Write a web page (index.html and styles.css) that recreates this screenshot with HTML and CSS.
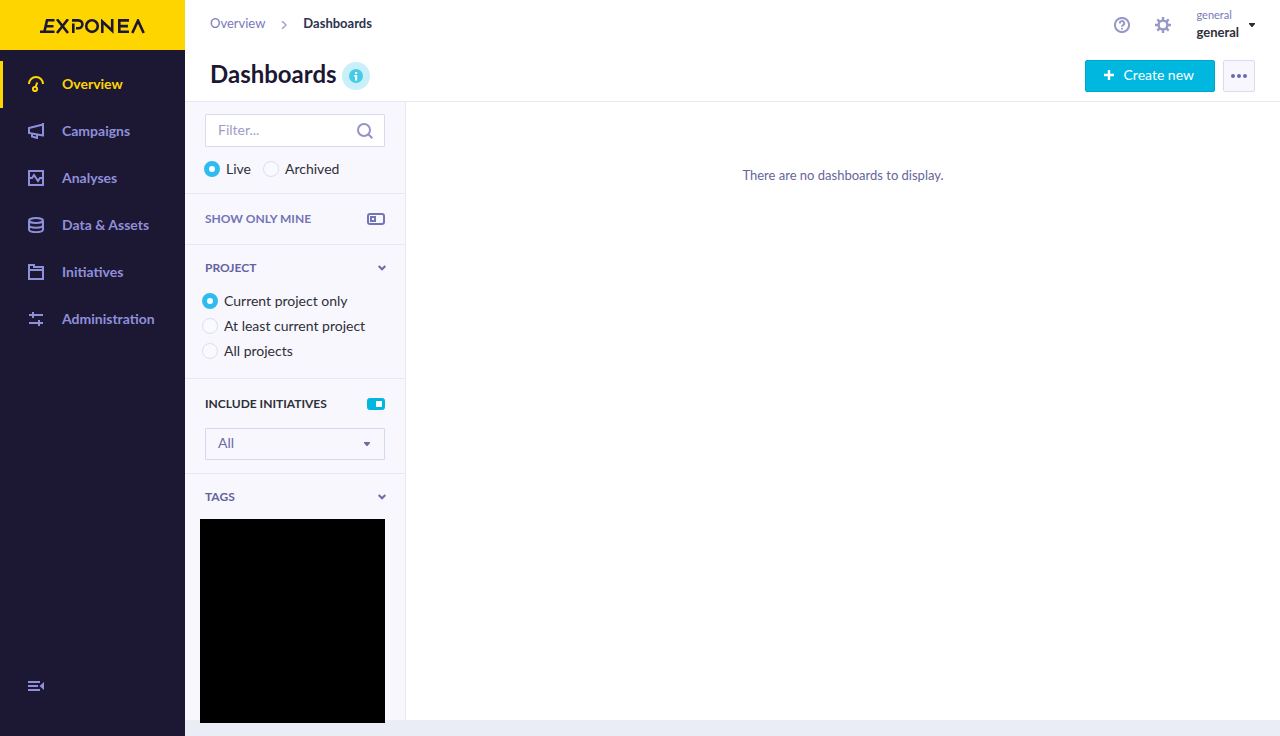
FILE: index.html
```html
<!DOCTYPE html>
<html lang="en">
<head>
<meta charset="utf-8">
<meta name="viewport" content="width=device-width, initial-scale=1">
<title>Dashboards</title>
<link rel="stylesheet" href="styles.css">
</head>
<body class="app">
<aside class="sidebar">
  <a class="brand" href="#" aria-label="Exponea">
    <svg width="106" height="15" viewBox="0 0 106 15" fill="none" stroke="#1c1733" stroke-width="2.6">
      <path d="M6 1.3H14.5M4.5 7.2H13.5M0 12.8H14.5M7 1.3L4.4 12.8"/>
      <path d="M17 .2L28 14M28 .2L17 14"/>
      <path d="M33.3 14V4.5M32 1.4H38.5A3.9 3.9 0 0 1 38.5 9.2H36"/>
      <circle cx="52" cy="7.1" r="5.8"/>
      <path d="M62.3 14V2.5L72.2 11.8V0"/>
      <path d="M89 1.4H79.3V12.8H89M79.3 7.1H88"/>
      <path d="M92.3 14L98 1.6L103.7 14"/>
    </svg>
  </a>
  <nav class="nav">
    <a class="nav-item nav-item-active" href="#">
      <svg class="icon" viewBox="0 0 16 16"><path d="M1 8A7 7 0 0 1 15 8M7.6 11L9.2 6.5"/><circle cx="7" cy="13" r="2.1"/></svg>
      <span>Overview</span>
    </a>
    <a class="nav-item" href="#">
      <svg class="icon" viewBox="0 0 16 16"><path d="M15 0V13.5M15 1.5L1 5V10L15 12.5M4 10.5V13.5L9 15V11.5"/></svg>
      <span>Campaigns</span>
    </a>
    <a class="nav-item" href="#">
      <svg class="icon" viewBox="0 0 16 16"><path d="M1 1H15V15H1ZM1 8H4L6 5L10 11L12 8H15"/></svg>
      <span>Analyses</span>
    </a>
    <a class="nav-item" href="#">
      <svg class="icon" viewBox="0 0 16 16"><ellipse cx="8" cy="3.5" rx="7" ry="2.5"/><path d="M1 3.5V12.5C1 16 15 16 15 12.5V3.5M1 8C1 11.5 15 11.5 15 8"/></svg>
      <span>Data &amp; Assets</span>
    </a>
    <a class="nav-item" href="#">
      <svg class="icon" viewBox="0 0 16 16"><path d="M1 1H6V3H15V15H1ZM1 6H15"/></svg>
      <span>Initiatives</span>
    </a>
    <a class="nav-item" href="#">
      <svg class="icon" viewBox="0 0 16 16"><path d="M1 4H15M5 1V7M1 12H15M11 9V15"/></svg>
      <span>Administration</span>
    </a>
  </nav>
  <button class="collapse" type="button" aria-label="Collapse menu">
    <svg class="icon" viewBox="0 0 16 16"><path d="M0 4H12M0 8H10M0 12H12"/><path class="solid" d="M16 4V12L11.5 8Z"/></svg>
  </button>
</aside>
<div class="page">
  <header class="header">
    <div class="topbar">
      <nav class="crumbs" aria-label="Breadcrumb">
        <a class="crumb" href="#">Overview</a>
        <svg class="crumb-arrow" width="6" height="8" viewBox="0 0 6 8"><path d="M1 0L5 4L1 8"/></svg>
        <span class="crumb-current">Dashboards</span>
      </nav>
      <div class="account">
        <button class="plain" type="button" aria-label="Help">
          <svg class="tool-icon" viewBox="0 0 16 16"><circle cx="8" cy="8" r="7.1"/><path d="M5.8 6.5A2.2 2.2 0 1 1 9.2 8.1Q8 8.7 8 9.7M8 11V12.6"/></svg>
        </button>
        <button class="plain" type="button" aria-label="Settings">
          <svg class="tool-icon gear" viewBox="0 0 16 16"><circle cx="8" cy="8" r="4.4"/><path d="M8 0V3.5M8 12.5V16M0 8H3.5M12.5 8H16M2.3 2.3L4.8 4.8M11.2 11.2L13.7 13.7M13.7 2.3L11.2 4.8M4.8 11.2L2.3 13.7"/></svg>
        </button>
        <button class="plain project" type="button">
          <span class="project-names"><span class="project-group">general</span><span class="project-name">general</span></span>
          <svg width="6" height="4" viewBox="0 0 6 4"><path d="M0 0H6V1L3.5 4H2.5L0 1Z" fill="#2b2b33"/></svg>
        </button>
      </div>
    </div>
    <div class="titlebar">
      <h1 class="title">Dashboards</h1>
      <button class="info" type="button" aria-label="Information">
        <svg width="14" height="14" viewBox="0 0 14 14"><circle cx="7" cy="7" r="7" fill="#45cbe8"/><path d="M6 3H8.2V5H6ZM5.2 6H8.2V11.4H6V7.5H5.2Z" fill="#fff"/></svg>
      </button>
      <div class="actions">
        <button class="create" type="button">
          <svg width="10" height="10" viewBox="0 0 10 10"><path d="M5 0V10M0 5H10" stroke="#fff" stroke-width="2.4"/></svg>
          <span>Create new</span>
        </button>
        <button class="more" type="button" aria-label="More actions">
          <svg width="16" height="4" viewBox="0 0 16 4" fill="#6c6ba8"><circle cx="2" cy="2" r="2"/><circle cx="8" cy="2" r="2"/><circle cx="14" cy="2" r="2"/></svg>
        </button>
      </div>
    </div>
  </header>
  <div class="body">
    <form class="filters">
      <section class="group group-search">
        <div class="search">
          <input class="search-input" type="text" placeholder="Filter..." aria-label="Filter">
          <svg class="search-icon" width="16" height="16" viewBox="0 0 16 16"><circle cx="7" cy="7" r="6"/><path d="M11.3 11.3L15.3 15.3"/></svg>
        </div>
        <div class="states">
          <label class="option"><input class="radio" type="radio" name="state" checked>Live</label>
          <label class="option"><input class="radio" type="radio" name="state">Archived</label>
        </div>
      </section>
      <section class="group group-mine">
        <label class="heading" for="mine">SHOW ONLY MINE</label>
        <input class="toggle" type="checkbox" id="mine">
      </section>
      <section class="group group-project">
        <button class="plain heading-row" type="button">
          <span class="heading">PROJECT</span>
          <svg class="chevron" width="8" height="6" viewBox="0 0 8 6"><path d="M.7 1L4 4.3L7.3 1"/></svg>
        </button>
        <div class="options">
          <label class="option"><input class="radio" type="radio" name="project" checked>Current project only</label>
          <label class="option"><input class="radio" type="radio" name="project">At least current project</label>
          <label class="option"><input class="radio" type="radio" name="project">All projects</label>
        </div>
      </section>
      <section class="group group-initiatives">
        <div class="toggle-row">
          <label class="heading heading-dark" for="initiatives">INCLUDE INITIATIVES</label>
          <input class="toggle" type="checkbox" id="initiatives" checked>
        </div>
        <div class="select-wrap">
          <select class="select" aria-label="Initiative"><option>All</option></select>
          <svg class="select-arrow" width="6" height="4" viewBox="0 0 6 4"><path d="M0 0H6V1L3.5 4H2.5L0 1Z" fill="#6c6ba8"/></svg>
        </div>
      </section>
      <section class="group group-tags">
        <button class="plain heading-row" type="button">
          <span class="heading">TAGS</span>
          <svg class="chevron" width="8" height="6" viewBox="0 0 8 6"><path d="M.7 1L4 4.3L7.3 1"/></svg>
        </button>
        <div class="tags"></div>
      </section>
    </form>
    <main class="content"><p class="empty">There are no dashboards to display.</p></main>
  </div>
</div>
</body>
</html>
```
FILE: styles.css
```css
*, *::before { box-sizing: border-box; }
.app { margin: 0; min-height: 100vh; display: flex; background: #eaedf6; font: 14px/20px Lato, "Liberation Sans", sans-serif; color: #2f2f38; }
button, input, select { font: inherit; color: inherit; margin: 0; }
button { cursor: pointer; }
a { text-decoration: none; color: inherit; }
svg { display: block; flex: none; }
.plain { border: 0; padding: 0; background: none; text-align: left; }

.sidebar { width: 185px; flex: none; display: flex; flex-direction: column; background: #1c1733; color: #8e90da; }
.brand { height: 50px; display: flex; align-items: center; justify-content: center; background: #ffd500; padding-top: 2px; }
.nav { padding-top: 11px; }
.nav-item { display: flex; align-items: center; gap: 18px; height: 47px; padding: 0 0 2px 25px; border-left: 3px solid transparent; font-weight: 700; }
.nav-item-active { color: #ffd500; border-left-color: #ffd500; }
.icon { width: 16px; height: 16px; fill: none; stroke: currentColor; stroke-width: 2; }
.icon .solid { fill: currentColor; stroke: none; }
.collapse { margin-top: auto; margin-bottom: 34px; padding: 8px 28px; border: 0; background: none; align-self: flex-start; }

.page { flex: 1; min-width: 0; display: flex; flex-direction: column; padding-bottom: 16px; }
.header { background: #fff; border-bottom: 1px solid #e6e8f3; padding: 0 25px; }
.topbar { height: 50px; display: flex; justify-content: space-between; align-items: center; }
.crumbs { display: flex; align-items: center; font-size: 13px; padding-bottom: 4px; }
.crumb { color: #7a79b8; }
.crumb-arrow { margin: 3px 16px 0; fill: none; stroke: #a3a3cf; stroke-width: 1.5; }
.crumb-current { font-weight: 700; color: #2d3350; }
.account { display: flex; align-items: center; gap: 25px; }
.tool-icon { width: 16px; height: 16px; fill: none; stroke: #9797c8; stroke-width: 2; }
.gear { stroke-width: 2.4; }
.project { display: flex; align-items: center; gap: 10px; }
.project-names { display: flex; flex-direction: column; }
.project-group { font-size: 11px; line-height: 14px; color: #7a79b8; }
.project-name { font-size: 13px; font-weight: 700; line-height: 20px; }
.titlebar { height: 51px; display: flex; align-items: center; }
.title { margin: 0 5px 4px 0; font-size: 24px; line-height: 30px; font-weight: 700; color: #1c1733; }
.info { width: 28px; height: 28px; border: 0; border-radius: 50%; padding: 7px; background: #c9f0f8; }
.actions { margin-left: auto; display: flex; gap: 8px; }
.create { height: 32px; display: flex; align-items: center; gap: 10px; padding: 0 20px 2px 18px; border: 1px solid #00a6cb; border-radius: 2px; background: #00b7df; color: #fff; }
.more { width: 32px; height: 32px; padding: 0 7px; border: 1px solid #d9dcf0; border-radius: 2px; background: #f7f7fd; }

.body { flex: 1; display: flex; }
.filters { width: 221px; flex: none; display: flex; flex-direction: column; background: #f7f7fd; border-right: 1px solid #e6e8f3; }
.group { padding: 0 20px; border-bottom: 1px solid #e6e8f3; }
.group-search { padding-top: 12px; padding-bottom: 14px; }
.search { position: relative; }
.search-input { display: block; width: 100%; height: 33px; padding: 0 40px 2px 12px; border: 1px solid #d6dbee; border-radius: 1px; background: #fff; outline: 0; }
.search-input::placeholder { color: #a09dcb; opacity: 1; }
.search-icon { position: absolute; right: 12px; top: 9px; fill: none; stroke: #9492c6; stroke-width: 2; }
.states { display: flex; gap: 12px; margin: 12px 0 0 -1px; }
.option { display: flex; align-items: center; gap: 6px; }
.radio { appearance: none; width: 16px; height: 16px; border: 1px solid #dcdff0; border-radius: 50%; background: #f9fafd; }
.radio:checked { border: 5px solid #2ebcf0; background: #fff; }
.group-mine { height: 51px; display: flex; align-items: center; justify-content: space-between; }
.heading { font-size: 12px; font-weight: 700; color: #7374b5; }
.heading-dark { color: #2f2f38; }
.toggle { appearance: none; width: 18px; height: 12px; border: 2px solid #7374b5; border-radius: 3px; padding: 1px; display: flex; align-items: center; }
.toggle::before { content: ""; width: 6px; height: 6px; border: 2px solid #7374b5; }
.toggle:checked { border-color: #00b7df; background: #00b7df; justify-content: flex-end; }
.toggle:checked::before { border-color: #fff; background: #fff; }
.heading-row { width: 100%; display: flex; align-items: center; justify-content: space-between; }
.heading-row .heading { color: #6462a0; }
.chevron { margin-right: -1px; fill: none; stroke: #6c6ba8; stroke-width: 2; }
.group-project { padding-top: 13px; padding-bottom: 17px; }
.options { display: flex; flex-direction: column; gap: 5px; margin: 13px 0 0 -3px; }
.group-initiatives { padding-top: 15px; padding-bottom: 13px; }
.toggle-row { display: flex; align-items: center; justify-content: space-between; }
.select-wrap { position: relative; margin-top: 14px; }
.select { appearance: none; display: block; width: 100%; height: 32px; padding: 0 30px 2px 12px; border: 1px solid #d3daee; border-radius: 1px; background: #f7f7fd; color: #6c6ba8; }
.select-arrow { position: absolute; right: 15px; top: 14px; pointer-events: none; }
.group-tags { flex: 1; display: flex; flex-direction: column; padding-top: 13px; border-bottom: 0; }
.tags { position: relative; flex: 1; min-height: 160px; margin: 12px 0 -3px -5px; background: #000; }
.content { flex: 1; background: #fff; padding: 63px 20px; text-align: center; }
.empty { margin: 0; font-size: 13px; color: #66659b; }
```
